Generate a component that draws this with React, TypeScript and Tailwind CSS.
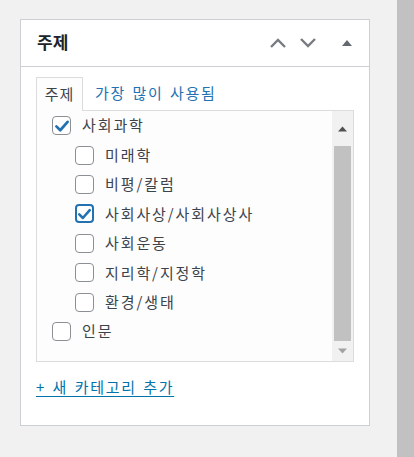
import React from "react";

type Item = { label: string; checked?: boolean; focus?: boolean; child?: boolean };

const items: Item[] = [
  { label: "사회과학", checked: true },
  { label: "미래학", child: true },
  { label: "비평/칼럼", child: true },
  { label: "사회사상/사회사상사", child: true, checked: true, focus: true },
  { label: "사회운동", child: true },
  { label: "지리학/지정학", child: true },
  { label: "환경/생태", child: true },
  { label: "인문" },
];

function Box({ checked, focus }: { checked?: boolean; focus?: boolean }) {
  return (
    <div
      className={
        "w-[19px] h-[19px] shrink-0 rounded-[4px] bg-white flex items-center justify-center " +
        (focus ? "border-2 border-[#2271b1]" : "border border-[#8c8f94]")
      }
    >
      {checked && (
        <svg width="16" height="16" viewBox="0 0 20 20">
          <path d="M3 10.5 L7.8 15.3 L17 4.8" fill="none" stroke="#2271b1" strokeWidth="3.4" strokeLinecap="round" strokeLinejoin="round" />
        </svg>
      )}
    </div>
  );
}

export default function App() {
  return (
    <div
      className="w-[414px] h-[457px] bg-[#f1f1f1] flex overflow-hidden"
      style={{ fontFamily: '"Noto Sans CJK KR", "Noto Sans", sans-serif' }}
    >
      <div className="w-[397px] shrink-0 pt-[19px] pl-[20px]">
        <div className="w-[350px] h-[407px] bg-white border border-[#ccd0d4] flex flex-col">
          <div className="h-[47px] border-b border-[#ccd0d4] flex items-center pl-[16px] pr-[16px] pb-[3px]">
            <div className="text-[17px] font-bold text-[#1d2327] leading-none">주제</div>
            <div className="ml-auto flex items-center pt-[3px]">
              <svg width="18" height="12" viewBox="0 0 18 12" className="mr-[12px]">
                <path d="M2 10 L9 3 L16 10" fill="none" stroke="#787c82" strokeWidth="2.4" />
              </svg>
              <svg width="18" height="12" viewBox="0 0 18 12" className="mr-[25px]">
                <path d="M2 2 L9 9 L16 2" fill="none" stroke="#787c82" strokeWidth="2.4" />
              </svg>
              <svg width="10" height="8" viewBox="0 0 10 8" className="mr-[1px]">
                <path d="M0 7 L5 1 L10 7 Z" fill="#646970" />
              </svg>
            </div>
          </div>
          <div className="px-[15px] pt-[10px]">
            <div className="flex items-end h-[33px]">
              <div className="h-[34px] w-[47px] border border-b-0 border-[#dcdcde] bg-[#fdfdfd] flex items-center justify-center text-[15px] text-[#3c434a] tracking-[1px] relative z-10 -mb-px">
                주제
              </div>
              <div className="h-[33px] flex items-center ml-[12px] text-[15px] text-[#2271b1] tracking-[1.7px] [word-spacing:1.5px]">
                가장 많이 사용됨
              </div>
            </div>
            <div className="h-[252px] border border-[#dcdcde] bg-[#fdfdfd] flex">
              <div className="flex-1 pl-[15px]">
                {items.map((it, i) => (
                  <div
                    key={i}
                    className={"h-[29.43px] flex items-center " + (it.child ? "pl-[23px]" : "")}
                  >
                    <Box checked={it.checked} focus={it.focus} />
                    <span className="ml-[11px] text-[15px] text-[#3c434a] tracking-[1.9px]">{it.label}</span>
                  </div>
                ))}
              </div>
              <div className="w-[21px] bg-[#f1f1f1] flex flex-col items-center">
                <div className="h-[35px] w-full flex items-center justify-center">
                  <svg width="9" height="6" viewBox="0 0 9 6">
                    <path d="M0 5.5 L4.5 0.5 L9 5.5 Z" fill="#505050" />
                  </svg>
                </div>
                <div className="w-[17px] h-[195px] bg-[#c1c1c1]" />
                <div className="flex-1 w-full flex items-center justify-center">
                  <svg width="9" height="6" viewBox="0 0 9 6">
                    <path d="M0 0.5 L4.5 5.5 L9 0.5 Z" fill="#a3a3a3" />
                  </svg>
                </div>
              </div>
            </div>
            <div className="mt-[14px] text-[15px] text-[#0073aa] underline underline-offset-[3px] tracking-[1.7px] [word-spacing:1.5px]">
              + 새 카테고리 추가
            </div>
          </div>
        </div>
      </div>
      <div className="w-[17px] h-full bg-[#c1c1c1]" />
    </div>
  );
}
